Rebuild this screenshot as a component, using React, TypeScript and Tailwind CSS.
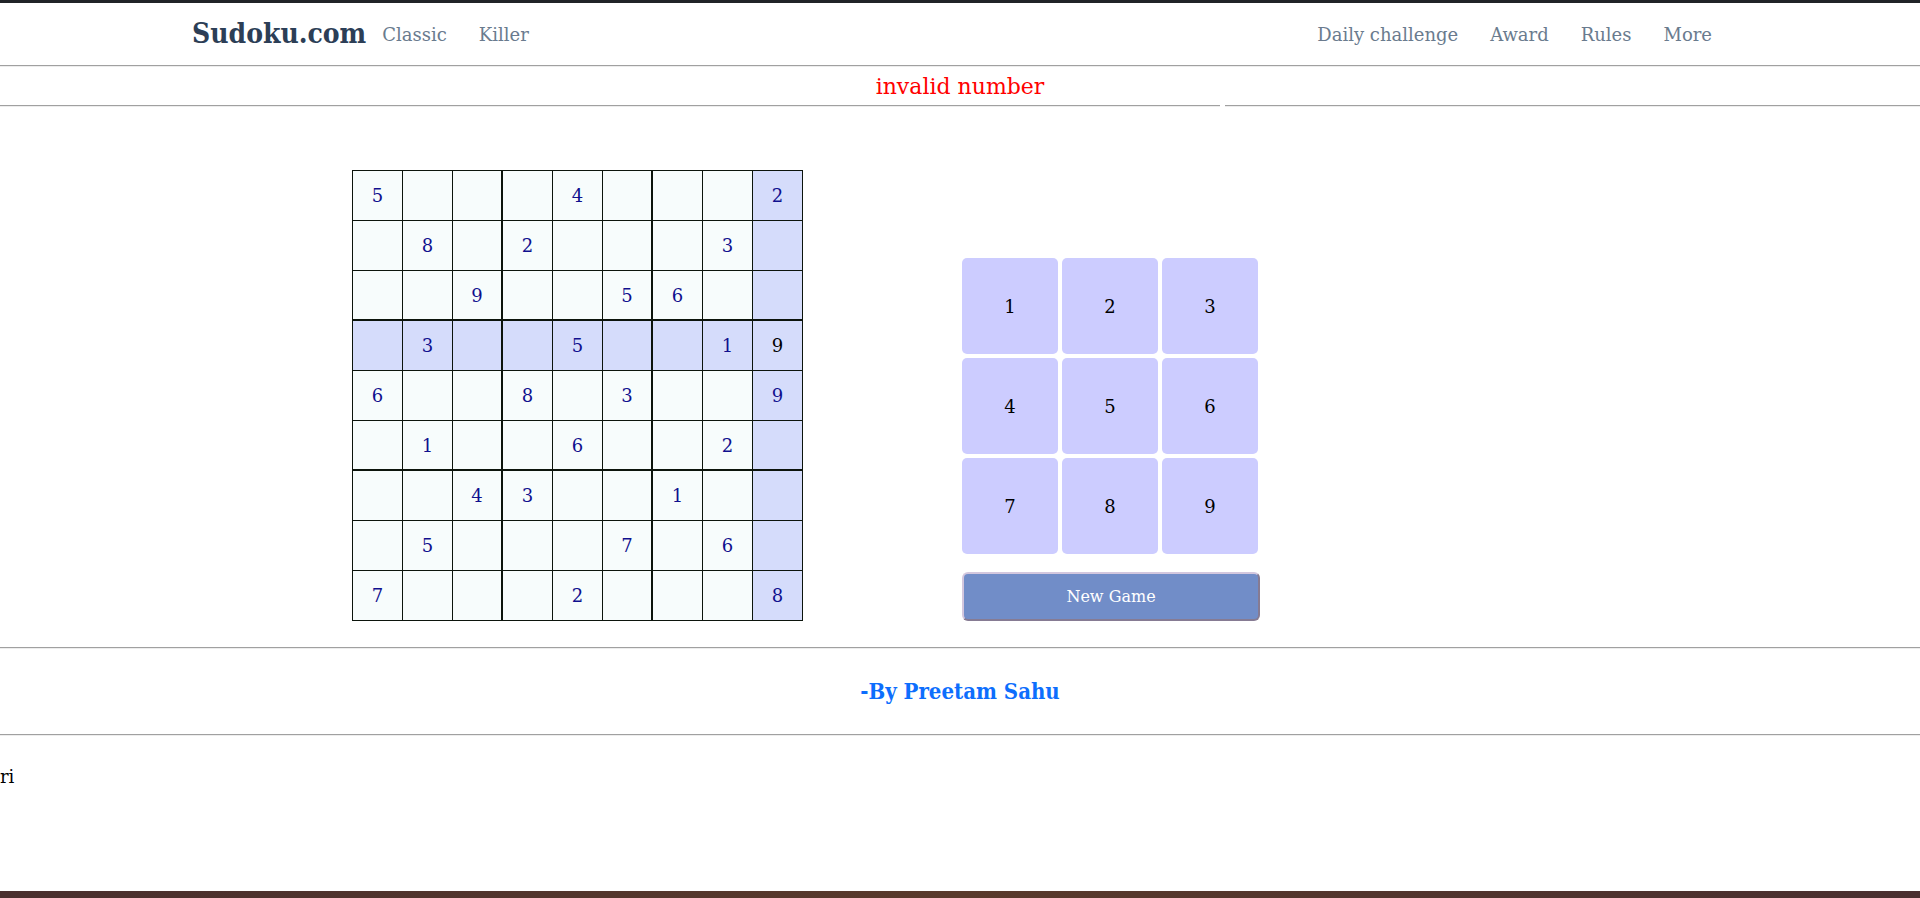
import React from "react";

const puzzle: (number | null)[][] = [
  [5, null, null, null, 4, null, null, null, 2],
  [null, 8, null, 2, null, null, null, 3, null],
  [null, null, 9, null, null, 5, 6, null, null],
  [null, 3, null, null, 5, null, null, 1, 9],
  [6, null, null, 8, null, 3, null, null, 9],
  [null, 1, null, null, 6, null, null, 2, null],
  [null, null, 4, 3, null, null, 1, null, null],
  [null, 5, null, null, null, 7, null, 6, null],
  [7, null, null, null, 2, null, null, null, 8],
];

const selRow = 3;
const selCol = 8;

function Rule() {
  return <div className="h-[2px] w-full border-t border-b border-t-[#a0a0a0] border-b-[#ededed]" />;
}

function Board() {
  return (
    <div className="grid grid-cols-[repeat(9,50px)] border-l border-t border-[#0c140c]">
      {puzzle.map((row, r) =>
        row.map((v, c) => {
          const thickRight = c === 2 || c === 5;
          const thickBottom = r === 2 || r === 5;
          const lit = r === selRow || c === selCol;
          const selected = r === selRow && c === selCol;
          return (
            <div
              key={`${r}-${c}`}
              className={`flex h-[50px] items-center justify-center border-[#0c140c] text-[18px] ${
                thickRight ? "border-r-2" : "border-r"
              } ${thickBottom ? "border-b-2" : "border-b"} ${
                lit ? "bg-[#d5dcfb]" : "bg-[#f7fcfc]"
              } ${selected ? "text-black" : "text-[#10108e]"}`}
            >
              {v ?? ""}
            </div>
          );
        })
      )}
    </div>
  );
}

function NumberPad() {
  return (
    <div className="flex flex-col">
      <div className="grid grid-cols-[repeat(3,96px)] gap-1">
        {[1, 2, 3, 4, 5, 6, 7, 8, 9].map((n) => (
          <button
            key={n}
            className="flex h-24 items-center justify-center rounded-[5px] bg-[#ccccff] text-[18px] text-black"
          >
            {n}
          </button>
        ))}
      </div>
      <button className="mt-[18px] h-[49px] w-[298px] rounded-md border-2 border-t-[#d3c7de] border-l-[#d3c7de] border-r-[#867b93] border-b-[#867b93] bg-[#718dc8] text-[16px] text-white">
        New Game
      </button>
    </div>
  );
}

export default function App() {
  const links = ["Daily challenge", "Award", "Rules", "More"];
  return (
    <div className="flex min-h-screen flex-col bg-white font-['DejaVu_Serif',serif]">
      <div className="h-[3px] bg-[#202328]" />
      <nav className="mx-auto flex h-[62px] w-[80%] items-center justify-between">
        <div className="flex items-center">
          <span className="text-[28px] font-semibold text-[#2c3e56] [font-stretch:semi-condensed]">
            Sudoku.com
          </span>
          <a className="px-4 text-[18px] text-[#6a7b8e]">Classic</a>
          <a className="px-4 text-[18px] text-[#6a7b8e]">Killer</a>
        </div>
        <div className="flex items-center">
          {links.map((l) => (
            <a key={l} className="px-4 text-[18px] text-[#6a7b8e]">
              {l}
            </a>
          ))}
        </div>
      </nav>
      <Rule />
      <div className="flex h-[38px] items-center justify-center text-[22px] text-[#ff0000]">
        invalid number
      </div>
      <div className="flex gap-[5px]">
        <div className="w-[1220px]">
          <Rule />
        </div>
        <div className="flex-1">
          <Rule />
        </div>
      </div>

      <main className="mt-[63px] flex items-end gap-[159px] pl-[352px]">
        <Board />
        <NumberPad />
      </main>

      <div className="mt-[26px]">
        <Rule />
      </div>
      <div className="flex h-[85px] items-center justify-center text-[22px] font-bold text-[#0d6efd] [font-stretch:semi-condensed]">
        -By Preetam Sahu
      </div>
      <Rule />
      <p className="mt-[27px] text-[18px] text-black">ri</p>

      <div className="mt-auto h-[7px] bg-gradient-to-r from-[#4a2f2e] via-[#5a3a2c] to-[#4a2f30]" />
    </div>
  );
}
